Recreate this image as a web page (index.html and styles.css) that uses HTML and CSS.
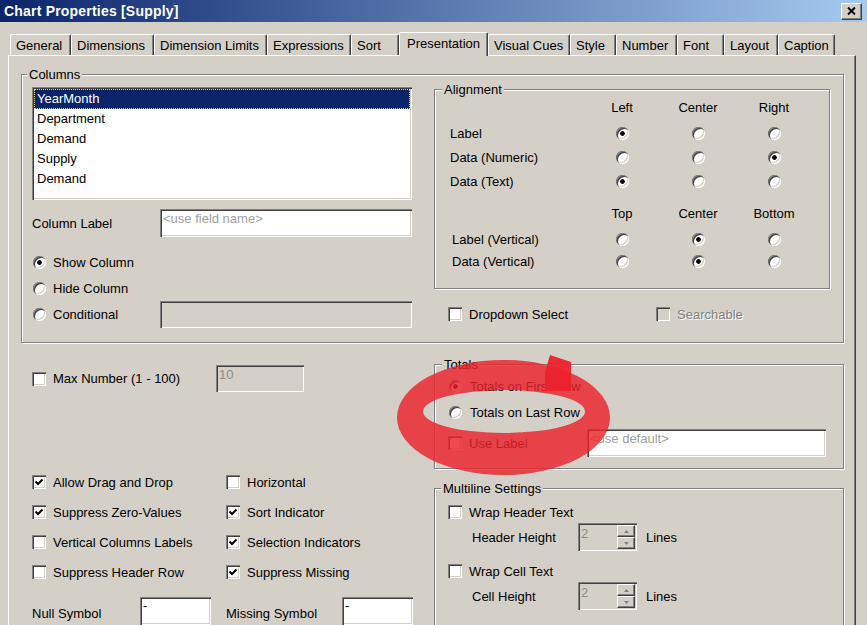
FILE: index.html
```html
<!DOCTYPE html>
<html>
<head>
<meta charset="utf-8">
<title>Chart Properties [Supply]</title>
<link rel="stylesheet" href="styles.css">
</head>
<body>
<div class="titlebar">
  <span class="title">Chart Properties [Supply]</span>
  <span class="close"><svg width="9" height="8" viewBox="0 0 9 8"><path d="M1 0.5 L8 7.5 M8 0.5 L1 7.5" stroke="#000" stroke-width="2" fill="none"/></svg></span>
</div>
<div class="tabs">
  <div class="tab t1">General</div>
  <div class="tab t2">Dimensions</div>
  <div class="tab t3">Dimension Limits</div>
  <div class="tab t4">Expressions</div>
  <div class="tab t5">Sort</div>
  <div class="tab active t6">Presentation</div>
  <div class="tab t7">Visual Cues</div>
  <div class="tab t8">Style</div>
  <div class="tab t9">Number</div>
  <div class="tab t10">Font</div>
  <div class="tab t11">Layout</div>
  <div class="tab t12">Caption</div>
</div>
<div class="panel">
  <fieldset class="group g-columns">
    <legend>Columns</legend>
    <div class="columns-grid">
      <div class="col-left">
        <div class="listbox">
          <div class="item sel">YearMonth</div>
          <div class="item">Department</div>
          <div class="item">Demand</div>
          <div class="item">Supply</div>
          <div class="item">Demand</div>
        </div>
        <div class="label-row">
          <span class="lbl-collabel">Column Label</span>
          <div class="field ph w-collabel">&lt;use field name&gt;</div>
        </div>
        <div class="opt first"><span class="radio ind1 on"></span><span>Show Column</span></div>
        <div class="opt"><span class="radio ind1"></span><span>Hide Column</span></div>
        <div class="opt cond"><span class="radio ind1"></span><span class="lbl-cond">Conditional</span><div class="field dis w-cond"></div></div>
      </div>
      <div class="col-right">
        <fieldset class="group g-align">
          <legend>Alignment</legend>
          <div class="align-body">
            <div class="arow hdr"><span></span><span class="c">Left</span><span class="c">Center</span><span class="c">Right</span></div>
            <div class="arow mt4"><span>Label</span><span class="radio on"></span><span class="radio"></span><span class="radio"></span></div>
            <div class="arow"><span>Data (Numeric)</span><span class="radio"></span><span class="radio"></span><span class="radio on"></span></div>
            <div class="arow"><span>Data (Text)</span><span class="radio on"></span><span class="radio"></span><span class="radio"></span></div>
            <div class="arow mt8"><span></span><span class="c">Top</span><span class="c">Center</span><span class="c">Bottom</span></div>
            <div class="arow mt2"><span class="vl">Label (Vertical)</span><span class="radio"></span><span class="radio on"></span><span class="radio"></span></div>
            <div class="arow hdr"><span class="vl">Data (Vertical)</span><span class="radio"></span><span class="radio on"></span><span class="radio"></span></div>
          </div>
        </fieldset>
        <div class="dd-row">
          <div class="chk-item w-dd"><span class="chk"></span><span>Dropdown Select</span></div>
          <div class="chk-item disabled"><span class="chk dis"></span><span>Searchable</span></div>
        </div>
      </div>
    </div>
  </fieldset>

  <div class="lower">
    <div class="lower-left">
      <div class="max-row">
        <div class="chk-item w-max"><span class="chk"></span><span>Max Number (1 - 100)</span></div>
        <div class="field dis w-max-field">10</div>
      </div>
      <div class="chk-grid">
        <div class="chk-item"><span class="chk"><svg width="14" height="14" viewBox="0 0 14 14"><polyline points="3.5,6.5 6,9 10.5,4.5" fill="none" stroke="#000" stroke-width="2"/></svg></span><span>Allow Drag and Drop</span></div>
        <div class="chk-item"><span class="chk"></span><span>Horizontal</span></div>
        <div class="chk-item"><span class="chk"><svg width="14" height="14" viewBox="0 0 14 14"><polyline points="3.5,6.5 6,9 10.5,4.5" fill="none" stroke="#000" stroke-width="2"/></svg></span><span>Suppress Zero-Values</span></div>
        <div class="chk-item"><span class="chk"><svg width="14" height="14" viewBox="0 0 14 14"><polyline points="3.5,6.5 6,9 10.5,4.5" fill="none" stroke="#000" stroke-width="2"/></svg></span><span>Sort Indicator</span></div>
        <div class="chk-item"><span class="chk"></span><span>Vertical Columns Labels</span></div>
        <div class="chk-item"><span class="chk"><svg width="14" height="14" viewBox="0 0 14 14"><polyline points="3.5,6.5 6,9 10.5,4.5" fill="none" stroke="#000" stroke-width="2"/></svg></span><span>Selection Indicators</span></div>
        <div class="chk-item"><span class="chk"></span><span>Suppress Header Row</span></div>
        <div class="chk-item"><span class="chk"><svg width="14" height="14" viewBox="0 0 14 14"><polyline points="3.5,6.5 6,9 10.5,4.5" fill="none" stroke="#000" stroke-width="2"/></svg></span><span>Suppress Missing</span></div>
      </div>
      <div class="sym-row">
        <div class="sym"><span class="lbl-null">Null Symbol</span><div class="field w-sym">-</div></div>
        <div class="sym"><span class="lbl-missing">Missing Symbol</span><div class="field w-sym">-</div></div>
      </div>
    </div>
    <div class="lower-right">
      <fieldset class="group g-totals">
        <legend>Totals</legend>
        <div class="totals-body">
          <div class="opt t-first"><span class="radio ind1 on"></span><span>Totals on First Row</span></div>
          <div class="opt t-last"><span class="radio ind1"></span><span>Totals on Last Row</span></div>
          <div class="uselabel-row">
            <div class="chk-item w-uselabel"><span class="chk"></span><span>Use Label</span></div>
            <div class="field ph w-default">&lt;use default&gt;</div>
          </div>
        </div>
      </fieldset>
      <fieldset class="group g-multi">
        <legend>Multiline Settings</legend>
        <div class="multi-body">
          <div class="chk-item ml-chk first"><span class="chk"></span><span>Wrap Header Text</span></div>
          <div class="spin-row">
            <span class="lbl-spin">Header Height</span>
            <div class="spin"><span class="spin-val">2</span><span class="spin-btns"><span class="sbtn"><svg width="5" height="3" viewBox="0 0 5 3"><polygon points="2.5,0 5,3 0,3" fill="#808080"/></svg></span><span class="sbtn"><svg width="5" height="3" viewBox="0 0 5 3"><polygon points="0,0 5,0 2.5,3" fill="#808080"/></svg></span></span></div>
            <span class="lines">Lines</span>
          </div>
          <div class="chk-item ml-chk second"><span class="chk"></span><span>Wrap Cell Text</span></div>
          <div class="spin-row">
            <span class="lbl-spin">Cell Height</span>
            <div class="spin"><span class="spin-val">2</span><span class="spin-btns"><span class="sbtn"><svg width="5" height="3" viewBox="0 0 5 3"><polygon points="2.5,0 5,3 0,3" fill="#808080"/></svg></span><span class="sbtn"><svg width="5" height="3" viewBox="0 0 5 3"><polygon points="0,0 5,0 2.5,3" fill="#808080"/></svg></span></span></div>
            <span class="lines">Lines</span>
          </div>
        </div>
      </fieldset>
    </div>
  </div>
</div>
<svg class="annot" width="867" height="625" viewBox="0 0 867 625">
  <path fill-rule="evenodd" fill="rgb(236,34,44)" fill-opacity="0.82"
    d="M397 417.5 a106.5 57.5 0 1 0 213 0 a106.5 57.5 0 1 0 -213 0 Z M423 411.5 a81 21.5 0 1 0 162 0 a81 21.5 0 1 0 -162 0 Z"/>
  <polygon points="550,355 571,362 571,391 545,391 545,372" fill="rgb(236,34,44)" fill-opacity="0.95"/>
</svg>
</body>
</html>
```

FILE: styles.css
```css
* { box-sizing: border-box; }
html, body { margin: 0; padding: 0; }
body {
  position: relative;
  width: 867px;
  height: 625px;
  overflow: hidden;
  background: #d4d0c8;
  font-family: "Liberation Sans", Arial, sans-serif;
  font-size: 13px;
  line-height: 15px;
  color: #000;
}

/* title bar */
.titlebar {
  height: 22px;
  display: flex;
  align-items: center;
  justify-content: space-between;
  padding: 0 5px 0 4px;
  background: linear-gradient(to right, #0a246a, #a6caf0);
}
.title { color: #fff; font-weight: bold; font-size: 14px; letter-spacing: 0.2px; }
.close {
  width: 21px; height: 17px;
  display: flex; align-items: center; justify-content: center;
  background: #d4d0c8;
  border: 1px solid; border-color: #fff #404040 #404040 #fff;
  box-shadow: inset -1px -1px 0 #808080;
}

/* tabs */
.tabs {
  display: flex;
  align-items: flex-end;
  height: 23px;
  margin-top: 10px;
  padding-left: 10px;
}
.tab {
  height: 21px;
  padding: 3px 0 0 5px;
  border-top: 1px solid #fff;
  border-left: 1px solid #fff;
  border-right: 1px solid #404040;
  box-shadow: inset -1px 0 0 #808080;
  border-radius: 2px 2px 0 0;
  white-space: nowrap;
  flex: none;
}
.tab.active {
  position: relative;
  z-index: 1;
  height: 24px;
  margin-bottom: -1px;
  padding-left: 7px;
  background: #d4d0c8;
}
.t1 { width: 61px; } .t2 { width: 83px; } .t3 { width: 113px; } .t4 { width: 84px; }
.t5 { width: 48px; } .t6 { width: 89px; } .t7 { width: 82px; } .t8 { width: 46px; }
.t9 { width: 61px; } .t10 { width: 47px; } .t11 { width: 54px; } .t12 { width: 57px; }

/* panel */
.panel {
  margin-left: 8px;
  width: 848px;
  height: 580px;
  border-top: 1px solid #fff;
  border-left: 1px solid #fff;
  border-right: 1px solid #404040;
  box-shadow: inset -1px 0 0 #808080;
  padding: 11px 11px 0 12px;
}

/* group boxes */
.group {
  margin: 0;
  padding: 0;
  min-inline-size: 0;
  border: 1px solid #808080;
  box-shadow: inset 1px 1px 0 #fff, 1px 1px 0 #fff;
}
.group > legend {
  margin-left: 7px;
  padding: 0 2px;
  line-height: 15px;
  background: #d4d0c8;
}
.g-columns > legend { margin-left: 5px; }
.g-multi > legend { margin-left: 6px; }
.columns-grid {
  display: grid;
  grid-template-columns: 380px 396px;
  column-gap: 22px;
  padding: 0 13px 14px 10px;
}

/* sunken controls */
.listbox, .field, .spin {
  background: #fff;
  box-shadow: inset 1px 1px 0 #808080, inset 2px 2px 0 #404040, inset -1px -1px 0 #fff, inset -2px -2px 0 #d4d0c8;
}
.listbox {
  margin-top: 5px;
  height: 113px;
  padding: 2px;
}
.item { height: 20px; line-height: 20px; padding-left: 3px; white-space: nowrap; }
.item.sel {
  background: #0a246a;
  color: #fff;
  outline: 1px dotted #e8d38a;
  outline-offset: -1px;
}

.field {
  height: 28px;
  padding: 2px 0 0 3px;
  white-space: nowrap;
  overflow: hidden;
  flex: none;
}
.field.dis { background: #d4d0c8; color: #8c8c8c; }
.ph { color: #a0a0a0; }

.label-row { display: flex; align-items: center; height: 28px; margin-top: 9px; }
.lbl-collabel { width: 128px; flex: none; }
.w-collabel { width: 252px; }

.opt { display: flex; align-items: center; gap: 7px; height: 26px; white-space: nowrap; }
.opt.first { margin-top: 12px; }
.opt.cond { height: 27px; }
.lbl-cond { width: 100px; flex: none; }
.w-cond { width: 252px; height: 27px; }

.radio {
  width: 13px; height: 13px;
  flex: none;
  border-radius: 50%;
  background: #fff;
  box-shadow: inset 1px 1px 0 #808080, inset 2px 2px 0 #404040, inset -1px -1px 0 #fff, inset -2px -2px 0 #d4d0c8;
}
.radio.on { background: radial-gradient(circle, #000 0, #000 2px, #fff 2.6px); }
.ind1 { margin-left: 1px; }

.chk {
  width: 14px; height: 14px;
  flex: none;
  display: flex;
  background: #fff;
  box-shadow: inset 1px 1px 0 #808080, inset 2px 2px 0 #404040, inset -1px -1px 0 #fff, inset -2px -2px 0 #d4d0c8;
}
.chk.dis { background: #d4d0c8; }
.chk-item { display: flex; align-items: center; gap: 7px; white-space: nowrap; }
.chk-item.disabled { color: #808080; text-shadow: 1px 1px 0 #fff; }

/* alignment */
.align-body { padding: 0 0 17px 15px; }
.arow {
  display: grid;
  grid-template-columns: 134px 76px 76px 76px;
  align-items: center;
  height: 24px;
  white-space: nowrap;
}
.arow.hdr { height: 20px; }
.arow.mt4 { margin-top: 4px; }
.arow.mt8 { margin-top: 8px; }
.arow.mt2 { margin-top: 2px; }
.arow .c { text-align: center; }
.arow .radio { justify-self: center; }
.vl { padding-left: 2px; }

.dd-row { display: flex; align-items: center; height: 26px; margin-top: 12px; padding-left: 14px; }
.w-dd { width: 208px; }

/* lower section */
.lower {
  display: grid;
  grid-template-columns: 381px 410px;
  column-gap: 21px;
  padding-left: 11px;
}
.max-row { display: flex; align-items: center; height: 27px; margin-top: 22px; }
.w-max { width: 184px; }
.w-max-field { width: 88px; height: 27px; }

.chk-grid {
  display: grid;
  grid-template-columns: 194px auto;
  grid-auto-rows: 30px;
  align-items: center;
  margin-top: 75px;
}
.sym-row { display: grid; grid-template-columns: 194px auto; margin-top: 10px; }
.sym { display: flex; }
.lbl-null { width: 108px; padding-top: 9px; }
.lbl-missing { width: 116px; padding-top: 9px; }
.w-sym { width: 71px; padding-top: 1px; }

.g-totals { margin-top: 14px; }
.totals-body { padding: 0 0 11px 13px; }
.t-first { margin-top: 2px; height: 24px; gap: 8px; }
.t-last { margin-top: 2px; height: 24px; gap: 8px; }
.uselabel-row { display: flex; align-items: center; margin-top: 5px; height: 28px; }
.w-uselabel { width: 139px; }
.w-default { width: 239px; }

.g-multi { margin-top: 12px; }
.multi-body { padding: 0 0 20px 13px; }
.ml-chk { height: 22px; }
.ml-chk.first { margin-top: 5px; }
.ml-chk.second { margin-top: 9px; }
.spin-row { display: flex; align-items: center; height: 28px; padding-left: 24px; }
.lbl-spin { width: 106px; flex: none; }
.spin {
  width: 59px; height: 28px;
  display: flex;
  padding: 2px;
  background: #d4d0c8;
  color: #8c8c8c;
}
.spin-val { padding: 1px 0 0 1px; }
.spin-btns { margin-left: auto; width: 18px; display: flex; flex-direction: column; }
.sbtn {
  flex: 1;
  display: flex; align-items: center; justify-content: center;
  background: #d4d0c8;
  border: 1px solid; border-color: #fff #404040 #404040 #fff;
  box-shadow: inset -1px -1px 0 #808080;
}
.lines { margin-left: 9px; }

/* annotation overlay */
.annot {
  position: absolute;
  left: 0; top: 0;
  pointer-events: none;
}
```
